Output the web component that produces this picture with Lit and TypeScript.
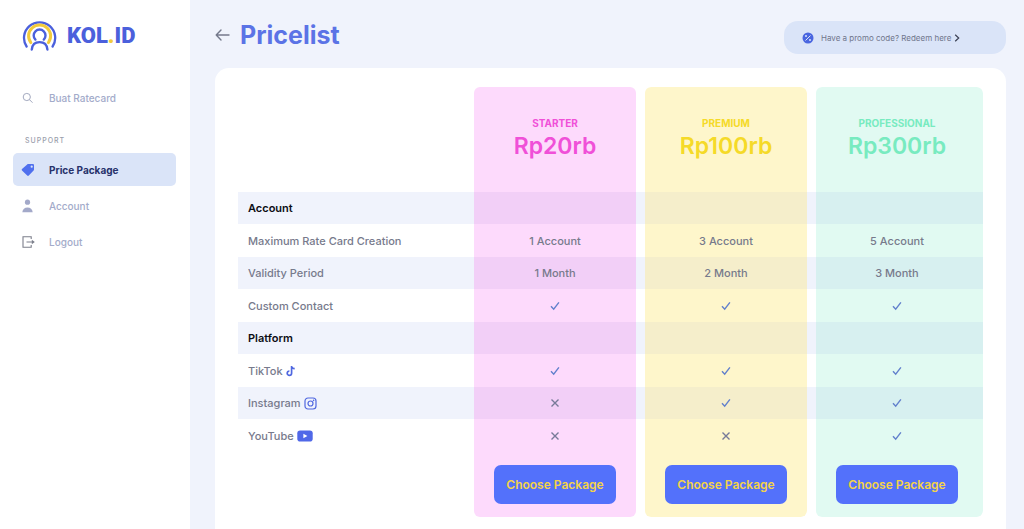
import { LitElement, html, css, svg, nothing } from "lit";
import { customElement } from "lit/decorators.js";

type Cell = string | boolean | null;

interface Row {
  label: string;
  section?: boolean;
  icon?: unknown;
  cells: Cell[];
}

const tiktok = html`<svg class="brand" width="10" height="12" viewBox="0 0 10 12" aria-hidden="true">
  <path d="M5.600 1v7.200a2.200 2.200 0 1 1-2.200-2.200M5.600 1c.2 1.700 1.400 2.600 3.100 2.700" fill="none" stroke="#5068e0" stroke-width="1.700"/>
</svg>`;

const instagram = html`<svg class="brand" width="13" height="13" viewBox="0 0 13 13" aria-hidden="true">
  <rect x="1" y="1" width="11" height="11" rx="3" fill="none" stroke="#5068e0" stroke-width="1.200"/>
  <circle cx="6.500" cy="6.500" r="2.500" fill="none" stroke="#5068e0" stroke-width="1.200"/>
  <circle cx="9.600" cy="3.400" r=".8" fill="#5068e0"/>
</svg>`;

const youtube = html`<svg class="brand" width="16" height="12" viewBox="0 0 16 12" aria-hidden="true">
  <rect x=".3" y=".5" width="15.400" height="11" rx="2.800" fill="#5068e8"/>
  <path d="M6.400 3.700v4.600l4-2.300z" fill="#fff"/>
</svg>`;

const plans = [
  { id: "starter", name: "STARTER", price: "Rp20rb" },
  { id: "premium", name: "PREMIUM", price: "Rp100rb" },
  { id: "professional", name: "PROFESSIONAL", price: "Rp300rb" },
];

const rows: Row[] = [
  { label: "Account", section: true, cells: [null, null, null] },
  { label: "Maximum Rate Card Creation", cells: ["1 Account", "3 Account", "5 Account"] },
  { label: "Validity Period", cells: ["1 Month", "2 Month", "3 Month"] },
  { label: "Custom Contact", cells: [true, true, true] },
  { label: "Platform", section: true, cells: [null, null, null] },
  { label: "TikTok", icon: tiktok, cells: [true, true, true] },
  { label: "Instagram", icon: instagram, cells: [false, true, true] },
  { label: "YouTube", icon: youtube, cells: [false, false, true] },
];

@customElement("side-nav")
export class SideNav extends LitElement {
  static styles = css`
    :host {
      display: block;
      background: #fff;
      padding: 19px 14px 18px 13px;
    }
    .logo {
      display: flex;
      align-items: center;
      gap: 10px;
      margin: 0 0 28px 9px;
      color: #4b60dc;
      font: 900 22px/34px Roboto, sans-serif;
      text-decoration: none;
    }
    .logo svg {
      flex: none;
    }
    .dot {
      color: #f2cb3c;
    }
    .item {
      display: flex;
      align-items: center;
      gap: 12px;
      height: 33px;
      padding: 0 8px;
      margin-bottom: 3px;
      border-radius: 5px;
      color: #a3abca;
      font-size: 10px;
      font-weight: 500;
      text-decoration: none;
    }
    .item svg {
      flex: none;
    }
    .active {
      background: #dae4f8;
      color: #27326b;
      font-weight: 700;
    }
    .heading {
      margin: 23px 0 8px 12px;
      color: #9a9eab;
      font-size: 7px;
      line-height: 8px;
      font-weight: 500;
      letter-spacing: 1px;
    }
  `;

  render() {
    return html`
      <a class="logo" href="#" aria-label="KOL.ID">
        <svg width="35" height="32" viewBox="0 0 35 32" fill="none" stroke-linecap="round">
          <path d="M4.600 26.500A15.600 15.600 0 1 1 30.600 26.500" stroke="#4b60dc" stroke-width="2.300"/>
          <path d="M8.800 22.600A11 11 0 1 1 26.400 22.600" stroke="#f2cb3c" stroke-width="3"/>
          <path d="M13.400 19.600A5.900 5.900 0 1 1 21.800 19.600" stroke="#4b60dc" stroke-width="2.400"/>
          <path d="M9.800 29.500c.4-4.600 3.400-7.400 7.800-7.400s7.400 2.800 7.800 7.400" stroke="#4b60dc" stroke-width="2.400"/>
        </svg>
        <span>KOL<span class="dot">.</span>ID</span>
      </a>
      <nav>
        <a class="item" href="#">
          <svg width="16" height="14" viewBox="0 0 16 14" fill="none" stroke="#a3a9bf" stroke-width="1">
            <circle cx="5.800" cy="6" r="3.600"/><path d="M8.500 8.700l3 3"/>
          </svg>
          Buat Ratecard
        </a>
        <h2 class="heading">SUPPORT</h2>
        <a class="item active" href="#" aria-current="page">
          <svg width="16" height="14" viewBox="0 0 16 14">
            <path fill-rule="evenodd" fill="#5070ee" d="M7.200 1h4.500c.8 0 1.300.5 1.300 1.300v4.300c0 .4-.1.700-.4 1L7.800 12.500c-.5.500-1.100.5-1.600 0L1 7.500c-.5-.5-.5-1.100 0-1.600l5.200-4.500c.3-.3.600-.4 1-.4zm3.500 1.600a1.100 1.100 0 1 0 0 2.200 1.100 1.100 0 0 0 0-2.200z"/>
          </svg>
          Price Package
        </a>
        <a class="item" href="#">
          <svg width="16" height="14" viewBox="0 0 16 14" fill="#a3a9c9">
            <circle cx="6.500" cy="3.200" r="2.600"/><path d="M1.300 13.300c.3-3 2.300-4.800 5.200-4.800s4.900 1.800 5.200 4.800z"/>
          </svg>
          Account
        </a>
        <a class="item" href="#">
          <svg width="16" height="14" viewBox="0 0 16 14" fill="none" stroke="#7c7f8b" stroke-width="1.100">
            <path d="M10.200 4V1.700H2v10.600h8.200V10M5.500 7h7"/><path d="M10.800 4.700L13.800 7l-3 2.300z" fill="#7c7f8b" stroke="none"/>
          </svg>
          Logout
        </a>
      </nav>
    `;
  }
}

@customElement("price-table")
export class PriceTable extends LitElement {
  static styles = css`
    :host {
      display: block;
    }
    .table {
      width: 100%;
      table-layout: fixed;
      border-collapse: separate;
      border-spacing: 0;
      color: #777a8c;
      font-size: 11px;
      line-height: 16px;
    }
    .label-col { width: 236px; }
    .starter-col { width: 162px; }
    .premium-col { width: 171px; }
    .professional-col { width: 176px; }
    th,
    td {
      padding: 0;
      vertical-align: middle;
      text-align: center;
      font-weight: 500;
    }
    .row { height: 33px; }
    .striped {
      height: 32px;
      background: #f0f3fc;
    }
    .label {
      padding-left: 10px;
      text-align: left;
      white-space: nowrap;
    }
    .label-content {
      display: flex;
      align-items: center;
      gap: 3px;
    }
    .section {
      color: #0c0e14;
      font-weight: 600;
    }
    .starter { background: #fddafc; }
    .premium { background: #fef6cb; }
    .professional {
      padding-right: 5px;
      background: #e1faf2;
    }
    .premium,
    .professional {
      border-left: 9px solid transparent;
      background-clip: padding-box;
    }
    .striped .starter { background-color: #f2cff7; }
    .striped .premium { background-color: #f5eecb; }
    .striped .professional { background-color: #d7f0f0; }
    .head {
      height: 105px;
      vertical-align: top;
      border-radius: 6px 6px 0 0;
    }
    .head.premium,
    .head.professional {
      border-radius: 15px 6px 0 0 / 6px 6px 0 0;
    }
    .foot {
      height: 65px;
      border-radius: 0 0 6px 6px;
    }
    .foot.premium,
    .foot.professional {
      border-radius: 0 0 6px 15px / 0 0 6px 6px;
    }
    .name {
      display: block;
      padding-top: 29px;
      font-size: 10px;
      line-height: 14px;
      font-weight: 700;
    }
    .price {
      display: block;
      font-size: 23px;
      line-height: 32px;
      font-weight: 600;
    }
    .head.starter { color: #f050d8; }
    .head.premium { color: #f5da28; }
    .head.professional { color: #78ebc0; }
    .brand {
      flex: none;
    }
    .mark {
      display: block;
      margin: 0 auto;
    }
    .choose {
      width: 122px;
      height: 39px;
      padding: 0;
      border: 0;
      border-radius: 7px;
      background: #5371fb;
      color: #f3d348;
      font: inherit;
      font-size: 12px;
      font-weight: 600;
      vertical-align: middle;
      cursor: pointer;
    }
  `;

  private mark(value: Cell) {
    if (value === null) return nothing;
    if (typeof value === "string") return value;
    return html`<svg class="mark" width="12" height="12" viewBox="0 0 12 12" role="img"
      aria-label=${value ? "Included" : "Not included"} fill="none" stroke-width="1.400">
      ${value
        ? svg`<path d="M2 6.200l2.700 3L9.900 2.300" stroke="#6280cc"/>`
        : svg`<path d="M2.500 2.500l7 7M9.500 2.500l-7 7" stroke="#777a98"/>`}
    </svg>`;
  }

  render() {
    return html`
      <table class="table">
        <colgroup>
          <col class="label-col" />
          ${plans.map((p) => html`<col class="${p.id}-col" />`)}
        </colgroup>
        <thead>
          <tr>
            <td></td>
            ${plans.map(
              (p) => html`<th scope="col" class="head ${p.id}">
                <span class="name">${p.name}</span><span class="price">${p.price}</span>
              </th>`
            )}
          </tr>
        </thead>
        <tbody>
          ${rows.map(
            (row, i) => html`<tr class=${i % 2 ? "row" : "striped"}>
              <th scope="row" class="label ${row.section ? "section" : ""}">
                <span class="label-content">${row.label}${row.icon ?? nothing}</span>
              </th>
              ${row.cells.map((c, j) => html`<td class=${plans[j].id}>${this.mark(c)}</td>`)}
            </tr>`
          )}
        </tbody>
        <tfoot>
          <tr>
            <td></td>
            ${plans.map(
              (p) => html`<td class="foot ${p.id}"><button class="choose" type="button">Choose Package</button></td>`
            )}
          </tr>
        </tfoot>
      </table>
    `;
  }
}

@customElement("app-root")
export class AppRoot extends LitElement {
  static styles = css`
    :host {
      display: grid;
      grid-template-columns: 190px minmax(0, 1fr);
      min-height: 100vh;
      background: #f0f3fc;
      font-family: Inter, sans-serif;
    }
    .main {
      display: flex;
      flex-direction: column;
      padding: 21px 18px 0 25px;
    }
    .bar {
      display: flex;
      align-items: flex-start;
      justify-content: space-between;
      height: 47px;
    }
    .title-group {
      display: flex;
      align-items: center;
      gap: 10px;
    }
    .back {
      display: flex;
      padding: 0;
      border: 0;
      background: none;
      cursor: pointer;
    }
    .title {
      margin: 0;
      color: #5b73e6;
      font-size: 25px;
      line-height: 28px;
      font-weight: 700;
    }
    .promo {
      display: flex;
      align-items: center;
      box-sizing: border-box;
      width: 222px;
      height: 33px;
      gap: 7px;
      padding: 0 18px;
      border-radius: 14px;
      background: #dae4f8;
      color: #70768c;
      font-size: 8px;
      font-weight: 400;
      text-decoration: none;
      white-space: nowrap;
    }
    .promo-text {
      display: flex;
      align-items: center;
      gap: 3px;
    }
    .panel {
      flex: 1;
      padding: 19px 23px 12px;
      border-radius: 14px 14px 0 0;
      background: #fff;
    }
  `;

  render() {
    return html`
      <side-nav></side-nav>
      <main class="main">
        <header class="bar">
          <div class="title-group">
            <button class="back" type="button" aria-label="Back">
              <svg width="15" height="14" viewBox="0 0 15 14" fill="none" stroke="#757a8c" stroke-width="1.400" stroke-linecap="round" stroke-linejoin="round">
                <path d="M14 7H1.200M6 2L1.200 7 6 12"/>
              </svg>
            </button>
            <h1 class="title">Pricelist</h1>
          </div>
          <a class="promo" href="#">
            <svg width="12" height="12" viewBox="0 0 12 12">
              <circle cx="6" cy="6" r="5.500" fill="#4a66e0"/>
              <path d="M3.500 8.500l5-5" stroke="#dae4f8" stroke-width="1"/>
              <circle cx="4" cy="4" r="1" fill="#dae4f8"/><circle cx="8" cy="8" r="1" fill="#dae4f8"/>
            </svg>
            <span class="promo-text">
              Have a promo code? Redeem here
              <svg width="6" height="8" viewBox="0 0 6 8" fill="none" stroke="#3b4054" stroke-width="1.200">
                <path d="M1.200 .8l3.500 3.200-3.500 3.200"/>
              </svg>
            </span>
          </a>
        </header>
        <section class="panel"><price-table></price-table></section>
      </main>
    `;
  }
}
